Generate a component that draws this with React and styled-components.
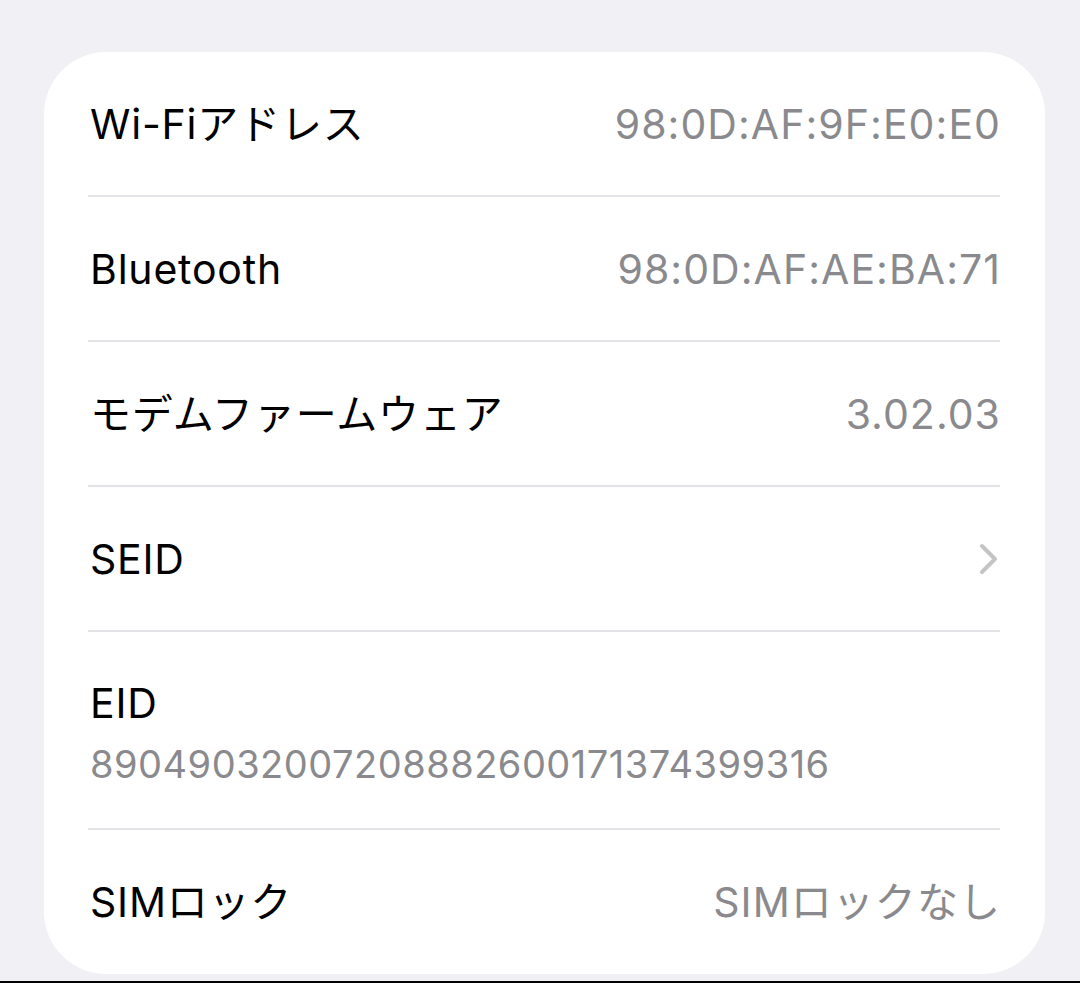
import React from "react";
import styled, { createGlobalStyle } from "styled-components";

const Global = createGlobalStyle`
  html, body { margin: 0; padding: 0; background: #f0f0f5; }
  body {
    font-family: Inter, "Noto Sans CJK JP", sans-serif;
    -webkit-font-smoothing: antialiased;
  }
`;

const Page = styled.div`
  width: 1080px;
  height: 983px;
  box-sizing: border-box;
  padding-top: 52px;
  display: flex;
  flex-direction: column;
  background: #f0f0f5;
`;

const Card = styled.div`
  margin-left: 44px;
  width: 1001px;
  height: 922px;
  box-sizing: border-box;
  background: #ffffff;
  border-radius: 62px;
  padding: 0 45px 0 44px;
  display: flex;
  flex-direction: column;
`;

const Row = styled.div`
  height: ${(p) => p.$h}px;
  box-sizing: border-box;
  display: flex;
  align-items: center;
  justify-content: space-between;
  border-bottom: ${(p) => (p.$last ? "none" : "2px solid #e3e3e7")};
  flex-shrink: 0;
`;

const StackRow = styled(Row)`
  flex-direction: column;
  align-items: flex-start;
  justify-content: flex-start;
  padding-top: 46px;
  gap: 11px;
`;

const Label = styled.span`
  font-size: 41px;
  line-height: 50px;
  color: #000;
  padding-left: 2px;
  letter-spacing: 0.8px;
`;

const Value = styled.span`
  font-size: 41px;
  line-height: 50px;
  color: #8a8a8e;
  letter-spacing: 1.05px;
  margin-right: -1px;
`;

const SubValue = styled.span`
  font-size: 38px;
  line-height: 50px;
  color: #8a8a8e;
  padding-left: 2px;
  letter-spacing: 0.5px;
`;

const Spacer = styled.div`
  flex: 1;
`;

const BottomBar = styled.div`
  height: 2px;
  background: #000;
`;

const Chevron = () => (
  <svg width="22" height="34" viewBox="0 0 22 34">
    <polyline
      points="4,4 17,17 4,30"
      fill="none"
      stroke="#c4c4c7"
      strokeWidth="4"
      strokeLinecap="round"
      strokeLinejoin="round"
    />
  </svg>
);

const rows = [
  { label: "Wi-Fiアドレス", value: "98:0D:AF:9F:E0:E0" },
  { label: "Bluetooth", value: "98:0D:AF:AE:BA:71" },
  { label: "モデムファームウェア", value: "3.02.03" },
  { label: "SEID", chevron: true },
];

export default function App() {
  return (
    <>
      <Global />
      <Page>
        <Card>
          {rows.map((r, i) => (
            <Row key={i} $h={145}>
              <Label>{r.label}</Label>
              {r.chevron ? <Chevron /> : <Value>{r.value}</Value>}
            </Row>
          ))}
          <StackRow $h={198}>
            <Label>EID</Label>
            <SubValue>89049032007208882600171374399316</SubValue>
          </StackRow>
          <Row $h={143} $last>
            <Label>SIMロック</Label>
            <Value>SIMロックなし</Value>
          </Row>
        </Card>
        <Spacer />
        <BottomBar />
      </Page>
    </>
  );
}
